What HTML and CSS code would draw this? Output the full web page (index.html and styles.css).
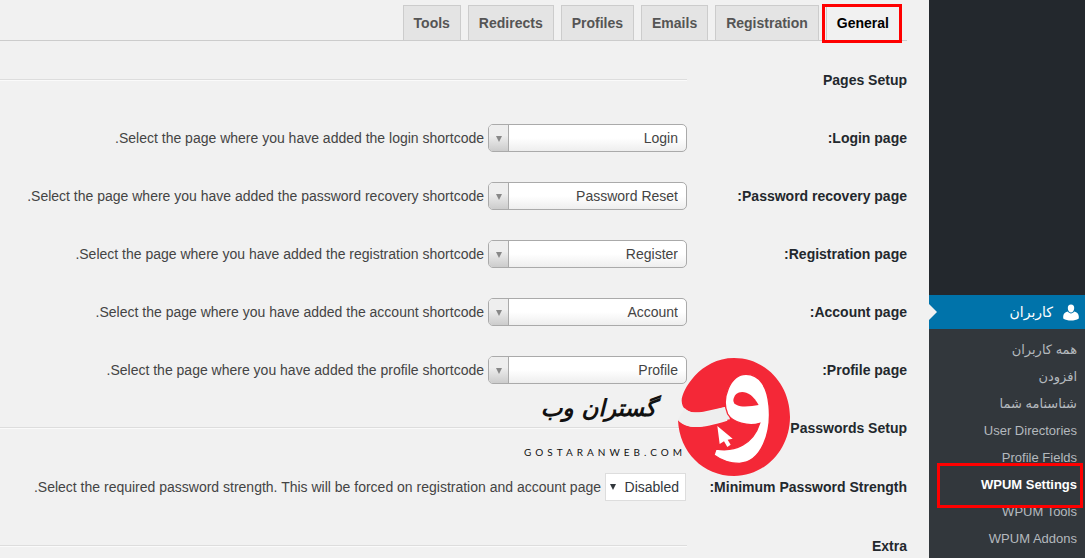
FILE: index.html
```html
<!DOCTYPE html>
<html lang="fa" dir="rtl">
<head>
    <meta charset="UTF-8">
    <meta name="viewport" content="width=device-width, initial-scale=1.0">
    <title>WPUM Settings</title>
    <link rel="stylesheet" href="styles.css">
</head>
<body>
    <aside class="admin-menu">
        <a href="#" class="menu-top">
            <svg class="menu-icon" width="16" height="17" viewBox="0 0 16 17" fill="#fff" aria-hidden="true">
                <path d="M8 0.5C10.200 0.5 11.200 2 11.200 4C11.200 6.500 9.800 8.500 8 8.500C6.200 8.500 4.800 6.500 4.800 4C4.800 2 5.800 0.5 8 0.5Z"/>
                <path d="M4.600 7.600C6.500 10 9.500 10 11.400 7.600C14 8.200 15.800 10 15.800 12.500V14.500C13.500 16 11 16.500 8 16.500C5 16.500 2.500 16 0.200 14.500V12.500C0.200 10 2 8.200 4.600 7.600Z"/>
            </svg>
            کاربران
        </a>
        <nav class="submenu">
            <a href="#">همه کاربران</a>
            <a href="#">افزودن</a>
            <a href="#">شناسنامه شما</a>
            <a href="#">User Directories</a>
            <a href="#">Profile Fields</a>
            <a href="#" class="current">WPUM Settings</a>
            <a href="#">WPUM Tools</a>
            <a href="#">WPUM Addons</a>
        </nav>
    </aside>

    <main class="content">
        <nav class="tabs">
            <a href="#" class="tab tab-active">General</a>
            <a href="#" class="tab">Registration</a>
            <a href="#" class="tab">Emails</a>
            <a href="#" class="tab">Profiles</a>
            <a href="#" class="tab">Redirects</a>
            <a href="#" class="tab">Tools</a>
        </nav>

        <form class="settings">
            <div class="row">
                <h3 class="row-title">Pages Setup</h3>
                <hr class="line">
            </div>
            <div class="row">
                <label class="row-title" for="login_page">Login page:</label>
                <div class="chosen"><select id="login_page"><option>Login</option></select></div>
                <span class="description">Select the page where you have added the login shortcode.</span>
            </div>
            <div class="row">
                <label class="row-title" for="password_page">Password recovery page:</label>
                <div class="chosen"><select id="password_page"><option>Password Reset</option></select></div>
                <span class="description">Select the page where you have added the password recovery shortcode.</span>
            </div>
            <div class="row">
                <label class="row-title" for="registration_page">Registration page:</label>
                <div class="chosen"><select id="registration_page"><option>Register</option></select></div>
                <span class="description">Select the page where you have added the registration shortcode.</span>
            </div>
            <div class="row">
                <label class="row-title" for="account_page">Account page:</label>
                <div class="chosen"><select id="account_page"><option>Account</option></select></div>
                <span class="description">Select the page where you have added the account shortcode.</span>
            </div>
            <div class="row">
                <label class="row-title" for="profile_page">Profile page:</label>
                <div class="chosen"><select id="profile_page"><option>Profile</option></select></div>
                <span class="description">Select the page where you have added the profile shortcode.</span>
            </div>
            <div class="row">
                <h3 class="row-title">Passwords Setup</h3>
                <hr class="line">
            </div>
            <div class="row row-tall">
                <label class="row-title" for="password_strength">Minimum Password Strength:</label>
                <div class="plain-select"><select id="password_strength"><option>Disabled</option></select></div>
                <span class="description">Select the required password strength. This will be forced on registration and account page.</span>
            </div>
            <div class="row">
                <h3 class="row-title">Extra</h3>
                <hr class="line">
            </div>
        </form>

        <div class="watermark">
            <svg width="112" height="118" viewBox="24 22 336 354" aria-hidden="true">
                <path fill="#f42837" d="M35 150C35 120 90 22 192 22C287 22 360 101 360 199C360 297 285 376 192 376C100 376 28 305 24 208C48 235 90 236 172 210L168 168L100 183C60 189 36 180 35 150Z"/>
                <path fill="#eee" d="M44 172C60 190 85 188 110 183C130 179 148 173 170 168L180 206C145 212 120 222 92 228C65 232 42 226 24 208Z"/>
                <path fill="#fff" stroke="#f42837" stroke-width="4" d="M228 71C270 71 292 110 297 165C305 245 275 335 208 338C180 338 152 328 132 313L138 295C195 305 250 280 269 218C235 228 188 216 173 190C153 145 180 71 228 71Z"/>
                <path fill="#f42837" d="M190 148C194 115 240 112 266 163C238 168 190 174 190 148Z"/>
                <path fill="#fff" d="M142 226L188 264L173 267L182 282L172 289L162 272L149 280Z"/>
            </svg>
            <div class="watermark-text">
                <span class="watermark-name">گستران وب</span>
                <span class="watermark-url">GOSTARANWEB.COM</span>
            </div>
        </div>
    </main>
</body>
</html>
```
FILE: styles.css
```css
* {
    box-sizing: border-box;
}
body {
    display: flex;
    height: 100vh;
    margin: 0;
    overflow: hidden;
    background-color: #f1f1f1;
    color: #444;
    font-family: "Liberation Sans", "DejaVu Sans", sans-serif;
    font-size: 14px;
    line-height: 20px;
}
a {
    text-decoration: none;
}

/* Admin menu */
.admin-menu {
    display: flex;
    flex-direction: column;
    justify-content: flex-end;
    flex: 0 0 156px;
    background-color: #23282d;
}
.menu-top {
    position: relative;
    display: flex;
    align-items: center;
    gap: 10px;
    height: 34px;
    padding: 0 6px;
    background-color: #0073aa;
    color: #fff;
}
.menu-top::after {
    content: "";
    position: absolute;
    left: 0;
    top: 9px;
    border: 8px solid transparent;
    border-left-color: #f1f1f1;
    border-right-width: 0;
}
.submenu {
    padding: 7px 0 6px;
    background-color: #32373c;
}
.submenu a {
    position: relative;
    display: block;
    padding: 0 8px;
    color: #b4b9be;
    font-size: 13px;
    line-height: 27px;
}
.submenu .current {
    color: #fff;
    font-weight: bold;
}
.submenu .current::after {
    content: "";
    position: absolute;
    inset: -8px 2px -10px 8px;
    border: 3px solid #f00;
    z-index: 1;
}

/* Tabs */
.content {
    position: relative;
    flex: 1;
    min-width: 0;
    padding: 5px 22px 0 0;
}
.tabs {
    display: flex;
    gap: 7px;
    padding-right: 7px;
    border-bottom: 1px solid #ccc;
}
.tab {
    position: relative;
    padding: 6px 10px 5px;
    border: 1px solid #ccc;
    border-bottom: none;
    background-color: #e4e4e4;
    color: #555;
    font-weight: bold;
    line-height: 23px;
}
.tab-active {
    background-color: #f1f1f1;
    color: #000;
}
.tab-active::after {
    content: "";
    position: absolute;
    inset: -2px -3px -3px -5px;
    border: 3px solid #f00;
}

/* Settings rows */
.settings {
    padding-top: 10px;
}
.row {
    display: flex;
    align-items: center;
    height: 58px;
}
.row-tall {
    height: 60px;
}
.row-title {
    flex: 0 0 220px;
    margin: 0;
    color: #23282d;
    font-size: 14px;
    font-weight: bold;
    white-space: nowrap;
}
.line {
    flex: 1;
    margin: 0;
    border: 0;
    border-top: 1px solid #ddd;
    border-bottom: 1px solid #fafafa;
}
.description {
    margin-right: 4px;
    white-space: nowrap;
}
.chosen,
.plain-select {
    position: relative;
}
select {
    display: block;
    height: 28px;
    margin: 0;
    appearance: none;
    font-family: inherit;
    font-size: 14px;
}
.chosen select {
    width: 199px;
    padding: 0 8px;
    border: 1px solid #aaa;
    border-radius: 5px;
    background: linear-gradient(#fff 50%, #eee);
    color: #444;
}
.chosen::before {
    content: "";
    position: absolute;
    left: 1px;
    top: 1px;
    width: 19px;
    height: 26px;
    border-right: 1px solid #aaa;
    border-radius: 4px 0 0 4px;
    background: linear-gradient(#eee 40%, #ccc);
    pointer-events: none;
}
.chosen::after,
.plain-select::after {
    content: "";
    position: absolute;
    left: 8px;
    top: 12px;
    border: 3px solid transparent;
    border-top: 6px solid #888;
    border-bottom: none;
    pointer-events: none;
}
.plain-select {
    margin-right: 1px;
}
.plain-select select {
    padding: 0 6px 0 18px;
    border: 1px solid #ddd;
    background-color: #fff;
    color: #32373c;
}
.plain-select::after {
    left: 5px;
    top: 11px;
    border-top-color: #32373c;
}

/* Watermark */
.watermark {
    position: absolute;
    top: 358px;
    right: 139px;
    display: flex;
    pointer-events: none;
}
.watermark-text {
    display: flex;
    flex-direction: column;
    align-items: flex-end;
    gap: 16px;
    padding-top: 30px;
    margin-right: -8px;
    direction: ltr;
    color: #111;
}
.watermark-name {
    margin-right: 30px;
    font-family: "DejaVu Sans", sans-serif;
    font-size: 23px;
    font-style: italic;
    font-weight: bold;
    line-height: 40px;
    direction: rtl;
}
.watermark-url {
    font-family: Lato, sans-serif;
    font-size: 10px;
    line-height: 16px;
    letter-spacing: 4px;
}
```
